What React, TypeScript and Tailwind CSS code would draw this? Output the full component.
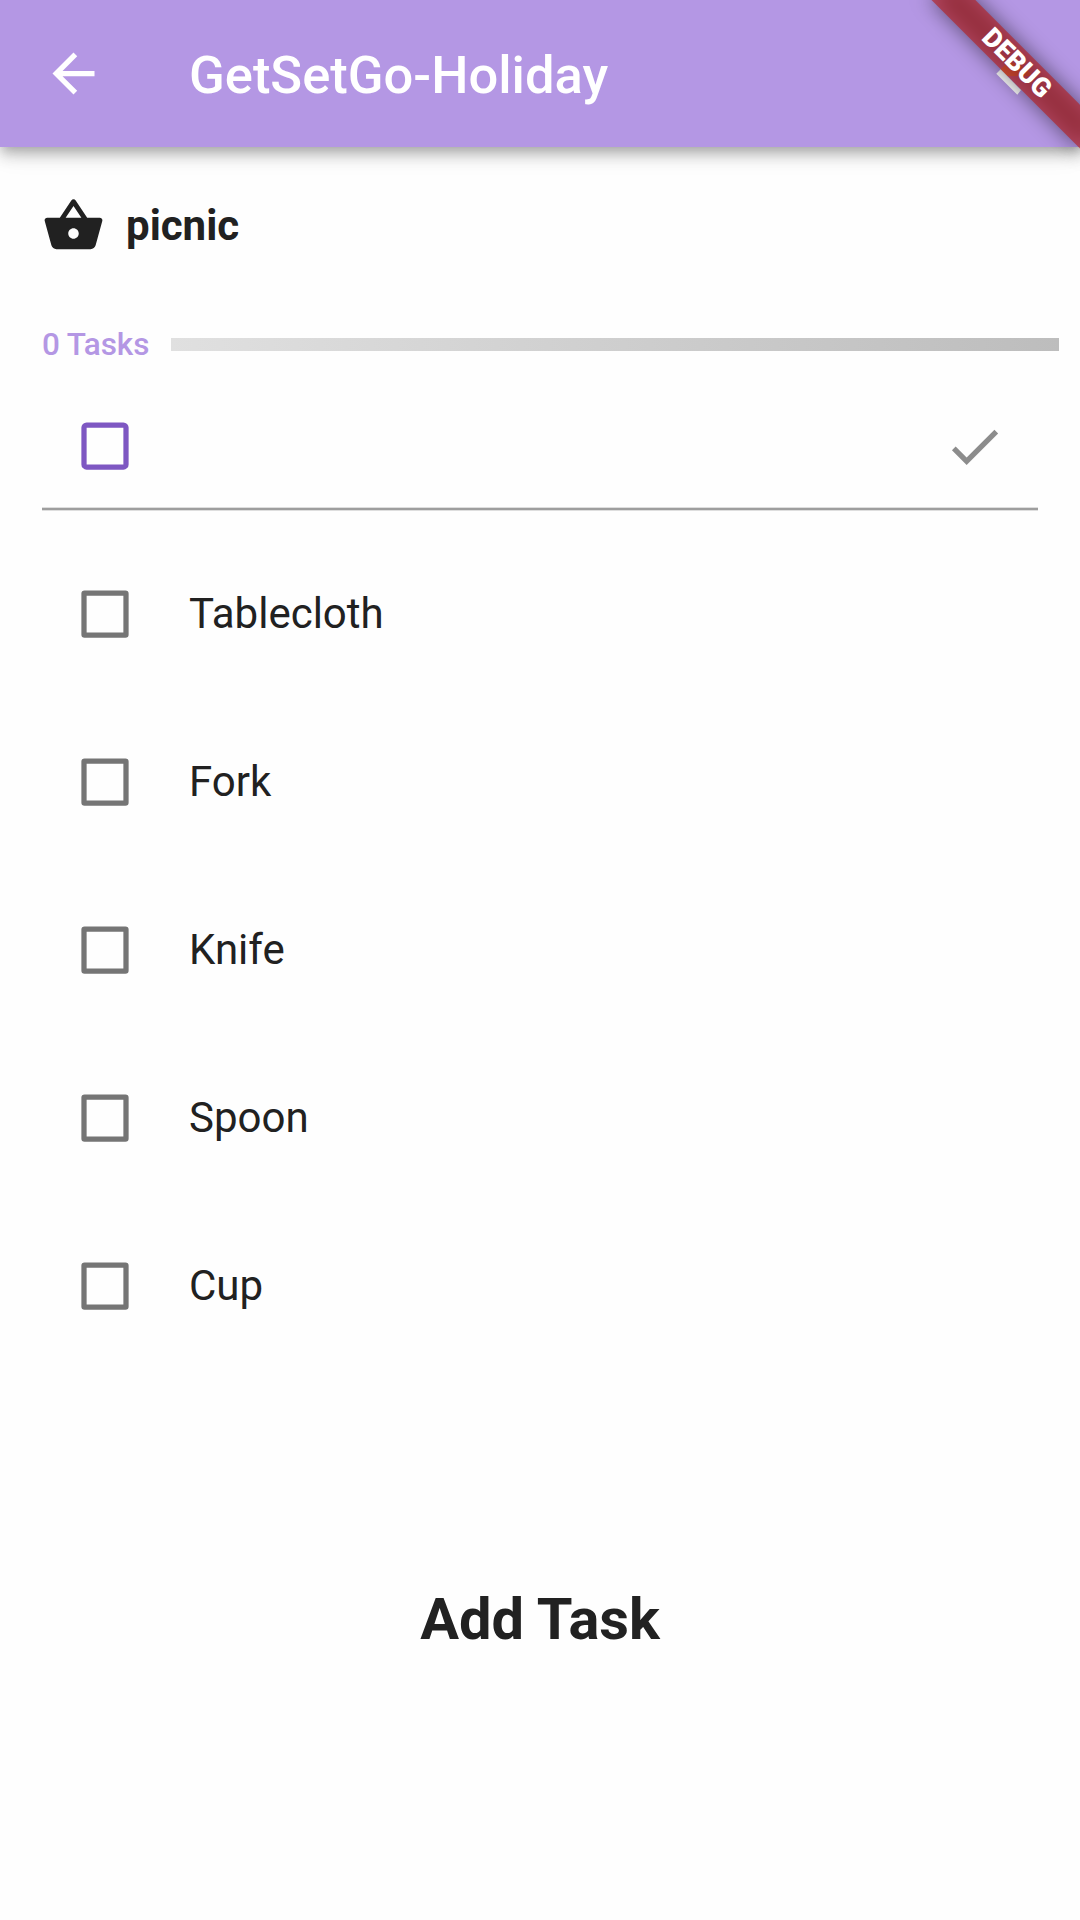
import { MdArrowBack, MdCheck, MdShoppingBasket } from "react-icons/md";

const tasks = ["Tablecloth", "Fork", "Knife", "Spoon", "Cup"];

function Checkbox({ className, radius }: { className: string; radius: number }) {
  return (
    <svg viewBox="0 0 48 48" className={className} fill="none" stroke="currentColor" strokeWidth="5.25">
      <rect x="3" y="3" width="42" height="42" rx={radius} />
    </svg>
  );
}

function DebugBanner() {
  return (
    <div className="pointer-events-none absolute top-0 right-0 h-[220px] w-[260px] overflow-hidden">
      <div className="absolute top-0 left-[260px] h-0 w-0 origin-top-left rotate-45">
        <div className="absolute top-[73.5px] left-[-105px] h-[31.5px] w-[210px] bg-black/50 blur-[10.4px]" />
        <div className="absolute top-[73.5px] left-[-105px] flex h-[31.5px] w-[210px] items-center justify-center bg-[#b71c1ca0] text-[26.8px] leading-none font-black text-white">
          DEBUG
        </div>
      </div>
    </div>
  );
}

export default function App() {
  return (
    <div className="relative h-[1920px] w-[1080px] overflow-hidden bg-[#fefefe] font-['Roboto',sans-serif] text-[#212121]">
      <header className="relative flex h-[147px] items-center bg-[#b497e4] pl-[42px] text-white shadow-[0_5px_10px_-3px_rgba(0,0,0,0.2),0_10px_13px_0_rgba(0,0,0,0.14),0_3px_26px_0_rgba(0,0,0,0.12)]">
        <MdArrowBack className="size-[63px]" />
        <h1 className="ml-[84px] pt-[2px] text-[52.5px] leading-[62px] font-medium">GetSetGo-Holiday</h1>
        <svg viewBox="0 0 63 63" className="mr-[21px] ml-auto size-[63px]">
          <path d="M4.7 27.3L11 21H22L38 34H11Z" fill="#f5a95c" />
          <path d="M0.3 31.7L4.7 27.3L25 48L21.3 52.7Z" fill="#ffffff" />
        </svg>
      </header>

      <div className="flex h-[156px] items-center pl-[42px]">
        <MdShoppingBasket className="size-[63px]" />
        <h2 className="ml-[21px] pt-[2px] text-[42px] leading-[50px] font-bold">picnic</h2>
      </div>

      <div className="mt-[20px] flex h-[42px] items-center pr-[21px] pl-[42px]">
        <span className="w-[129px] text-[31.5px] leading-[37px] font-medium tracking-[-0.1px] whitespace-nowrap text-[#b497e4]">0 Tasks</span>
        <div className="h-[13px] flex-1 bg-linear-to-r from-[#e0e0e0] to-[#bdbdbd]" />
      </div>

      <div className="mx-[42px] mt-[20px] flex h-[122px] items-center justify-between pr-[32px] pl-[39px]">
        <Checkbox className="size-[48px] text-[#7e57c2]" radius={2.6} />
        <MdCheck className="size-[63px] text-[#8c8c8c]" />
      </div>
      <div className="mx-[42px] h-[4px] border-y border-[#dedede] bg-[#9e9e9e]" />

      <ul className="mt-[19px]">
        {tasks.map((task) => (
          <li key={task} className="flex h-[168px] items-center pl-[81px]">
            <Checkbox className="size-[48px] text-[#757575]" radius={0.6} />
            <span className="ml-[60px] text-[42px] leading-[50px]">{task}</span>
          </li>
        ))}
      </ul>

      <div className="mt-[215px] text-center text-[57.75px] leading-[68px] font-bold">Add Task</div>

      <DebugBanner />
    </div>
  );
}
